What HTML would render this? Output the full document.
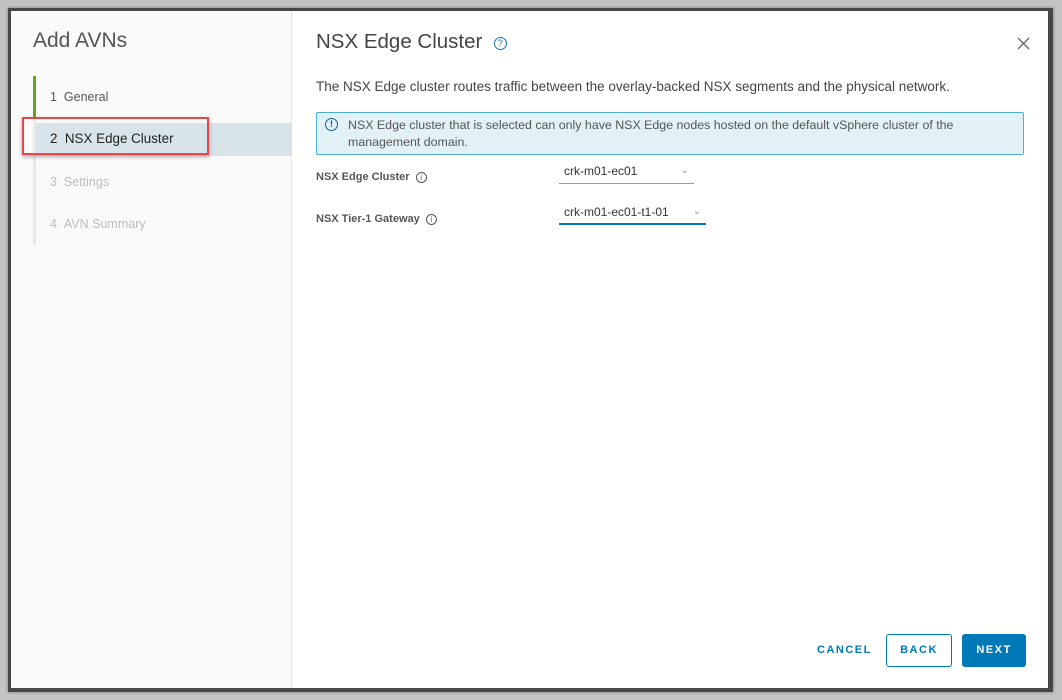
<!DOCTYPE html>
<html><head><style>
*{margin:0;padding:0;box-sizing:border-box}
body{width:1062px;height:700px;background:#c3c3c3;font-family:"Liberation Sans",sans-serif;position:relative;overflow:hidden;color:#565656}
.frame{position:absolute;left:8px;top:8px;width:1045px;height:684px;background:#474747;box-shadow:0 0 3px rgba(0,0,0,.4)}
.dlg{position:absolute;left:11px;top:11px;width:1037px;height:677px;background:#fff}
.left{position:absolute;left:0;top:0;width:281px;height:677px;background:#fafafa;border-right:1px solid #e6e6e6}
.abs{position:absolute;white-space:nowrap}
.lbl{font-size:11px;font-weight:bold;color:#565656}
.sel{position:absolute;height:21px;border-bottom:1px solid #9a9a9a;font-size:12px;color:#333;padding-left:5px;line-height:16px}
.btn{position:absolute;height:33px;border-radius:3px;font-size:11px;font-weight:bold;letter-spacing:1.5px;text-align:center;line-height:31px}
</style></head><body>
<div class="frame"></div>
<div class="dlg">
 <div class="left">
  <div class="abs" style="left:22px;top:18px;font-size:21px;color:#555">Add AVNs</div>
  <div class="abs" style="left:22px;top:65px;width:3px;height:42px;background:#62a420"></div>
  <div class="abs" style="left:22px;top:107px;width:3px;height:127px;background:#e8e8e8"></div>
  <div class="abs" style="left:39px;top:79px;font-size:12.5px;color:#565656">1&nbsp;&nbsp;General</div>
  <div class="abs" style="left:25px;top:112px;width:256px;height:33px;background:#d8e3ea"></div>
  <div class="abs" style="left:11px;top:106px;width:187px;height:38px;border:2px solid #e8474a;box-shadow:0 2px 4px rgba(0,0,0,.3)"></div>
  <div class="abs" style="left:39px;top:120px;font-size:13.4px;color:#222">2&nbsp;&nbsp;NSX Edge Cluster</div>
  <div class="abs" style="left:39px;top:164px;font-size:12.5px;color:#bdbdbd">3&nbsp;&nbsp;Settings</div>
  <div class="abs" style="left:39px;top:206px;font-size:12.5px;color:#bdbdbd">4&nbsp;&nbsp;AVN Summary</div>
 </div>
 <div class="abs" style="left:305px;top:19px;font-size:20.5px;color:#444">NSX Edge Cluster&nbsp; <span style="display:inline-block;width:13px;height:13px;border:1.3px solid #0a7bbd;border-radius:50%;font-size:9px;line-height:11px;text-align:center;color:#0a7bbd;vertical-align:2px">?</span></div>
 <svg class="abs" style="left:1006px;top:26px" width="13" height="13"><path d="M1 1L12 12M12 1L1 12" stroke="#666" stroke-width="1.3"/></svg>
 <div class="abs" style="left:305px;top:68px;font-size:13.5px;color:#444">The NSX Edge cluster routes traffic between the overlay-backed NSX segments and the physical network.</div>
 <div class="abs" style="left:305px;top:101px;width:708px;height:43px;background:#e1f1f6;border:1px solid #49afd9;border-radius:2px"></div>
 <div class="abs" style="left:314px;top:107px;width:13px;height:13px;border:1.3px solid #0a5f9e;border-radius:50%;font-size:9px;font-weight:bold;line-height:11px;text-align:center;color:#0a5f9e">!</div>
 <div class="abs" style="left:337px;top:106px;font-size:12.4px;line-height:17px;color:#565656">NSX Edge cluster that is selected can only have NSX Edge nodes hosted on the default vSphere cluster of the<br>management domain.</div>
 <div class="abs lbl" style="left:305px;top:160px">NSX Edge Cluster <span style="font-weight:normal;display:inline-block;width:11px;height:11px;border:1px solid #555;border-radius:50%;font-size:8px;line-height:9px;text-align:center;margin-left:3px">i</span></div>
 <div class="abs lbl" style="left:305px;top:202px">NSX Tier-1 Gateway <span style="font-weight:normal;display:inline-block;width:11px;height:11px;border:1px solid #555;border-radius:50%;font-size:8px;line-height:9px;text-align:center;margin-left:3px">i</span></div>
 <div class="sel" style="left:548px;top:152px;width:135px">crk-m01-ec01<span style="position:absolute;right:5px;top:0;color:#999;font-size:10px">&#8964;</span></div>
 <div class="sel" style="left:548px;top:193px;width:147px;border-bottom:2px solid #0079b8">crk-m01-ec01-t1-01<span style="position:absolute;right:5px;top:0;color:#999;font-size:10px">&#8964;</span></div>
 <div class="abs" style="left:806px;top:633px;font-size:11px;font-weight:bold;letter-spacing:1.5px;color:#0079b8">CANCEL</div>
 <div class="btn" style="left:875px;top:623px;width:66px;border:1px solid #0079b8;color:#0079b8;background:#fff">BACK</div>
 <div class="btn" style="left:951px;top:623px;width:64px;background:#0079b8;color:#fff;border:1px solid #0079b8">NEXT</div>
</div>
</body></html>
